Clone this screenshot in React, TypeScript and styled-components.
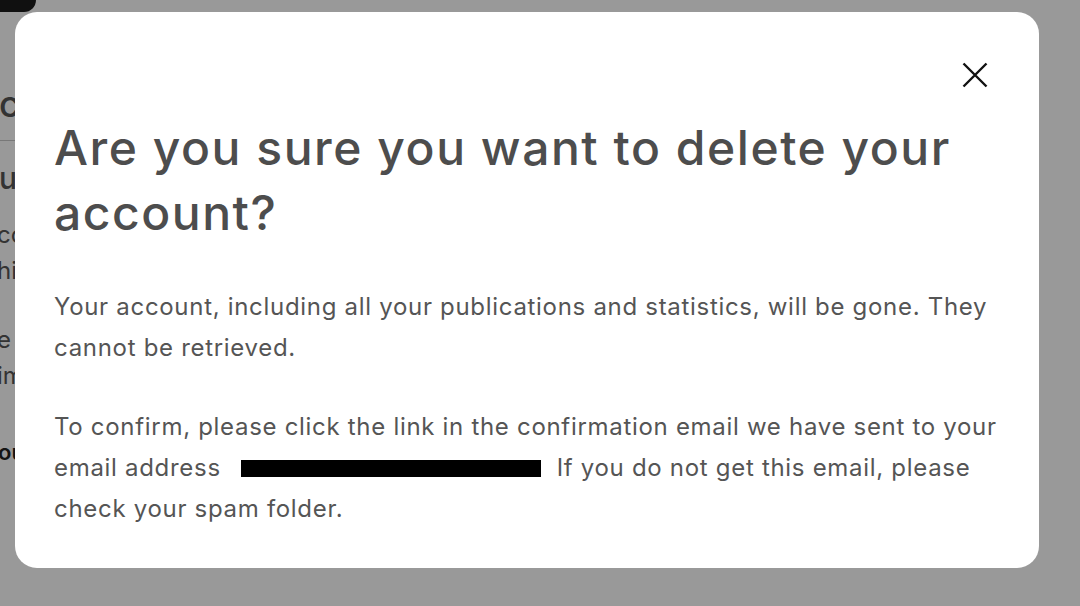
import styled, { createGlobalStyle } from "styled-components";

const GlobalStyle = createGlobalStyle`
  html, body {
    margin: 0;
    padding: 0;
    height: 100%;
    overflow: hidden;
    background: #ffffff;
  }

  body {
    font-family: Inter, "Noto Sans", "Liberation Sans", sans-serif;
  }
`;

function CloseIcon() {
  return (
    <svg width="26" height="26" viewBox="0 0 26 26" fill="none">
      <path
        d="M1.5 1.5L24.5 24.5M24.5 1.5L1.5 24.5"
        stroke="#111111"
        strokeWidth="2.4"
        strokeLinecap="butt"
      />
    </svg>
  );
}

function App() {
  return (
    <>
      <GlobalStyle />
      <Page>
        <TopTab />
        <PageTitle>cancel</PageTitle>
        <Rule />
        <SectionTitle>update</SectionTitle>
        <PageText>
          contact
          <br />
          history
        </PageText>
        <PageText $gap={33}>
          e the
          <br />
          import
        </PageText>
        <PageStrong>out</PageStrong>
      </Page>

      <Overlay>
        <Modal role="dialog" aria-modal="true">
          <ModalHeader>
            <CloseButton aria-label="Close">
              <CloseIcon />
            </CloseButton>
          </ModalHeader>
          <Title>Are you sure you want to delete your account?</Title>
          <Body>
            <Paragraph>
              Your account, including all your publications and statistics,
              will be gone. They cannot be retrieved.
            </Paragraph>
            <Paragraph>
              To confirm, please click the link in the confirmation email we
              have sent to your email address <Redacted /> If you do not get
              this email, please check your spam folder.
            </Paragraph>
          </Body>
        </Modal>
      </Overlay>
    </>
  );
}

const Page = styled.div`
  width: 120px;
  display: flex;
  flex-direction: column;
  align-items: flex-start;
  color: #555555;
  white-space: nowrap;
`;

const TopTab = styled.div`
  width: 36px;
  height: 12px;
  background: #1c1c1c;
  border-bottom-right-radius: 12px;
`;

const PageTitle = styled.h1`
  margin: 70px 0 0 -1px;
  font-size: 36px;
  line-height: 44px;
  font-weight: 500;
`;

const Rule = styled.div`
  align-self: stretch;
  margin-top: 14px;
  border-bottom: 1px solid #c8c8c8;
`;

const SectionTitle = styled.h2`
  margin: 17px 0 0 -1px;
  font-size: 30px;
  line-height: 40px;
  font-weight: 500;
`;

const PageText = styled.p<{ $gap?: number }>`
  margin: ${(p) => p.$gap ?? 19}px 0 0 -3px;
  font-size: 24px;
  line-height: 36px;
`;

const PageStrong = styled.p`
  margin: 40px 0 0 -2px;
  font-size: 22px;
  line-height: 36px;
  font-weight: 600;
  color: #222222;
`;

const Overlay = styled.div`
  position: fixed;
  inset: 0;
  display: flex;
  align-items: flex-start;
  padding: 12px 41px 0 15px;
  background: rgba(0, 0, 0, 0.4);
`;

const Modal = styled.div`
  box-sizing: border-box;
  width: 1024px;
  display: flex;
  flex-direction: column;
  padding: 40px 39px 39px 39px;
  background: #ffffff;
  border-radius: 22px;
`;

const ModalHeader = styled.div`
  display: flex;
  justify-content: flex-end;
  height: 46px;
`;

const CloseButton = styled.button`
  display: flex;
  align-items: center;
  justify-content: center;
  width: 50px;
  height: 46px;
  padding: 0;
  border: none;
  background: transparent;
  cursor: pointer;
`;

const Title = styled.h1`
  margin: 17px 0 41px 0;
  font-size: 48px;
  line-height: 65px;
  font-weight: 500;
  letter-spacing: 0.032em;
  color: #4d4d4d;
`;

const Body = styled.div`
  display: flex;
  flex-direction: column;
  gap: 38px;
`;

const Paragraph = styled.p`
  margin: 0;
  font-size: 24px;
  line-height: 41px;
  font-weight: 400;
  letter-spacing: 0.029em;
  color: #555555;
`;

const Redacted = styled.span`
  display: inline-block;
  width: 300px;
  height: 17px;
  margin: 0 8px 0 13px;
  vertical-align: -1px;
  background: #000000;
`;

export default App;
